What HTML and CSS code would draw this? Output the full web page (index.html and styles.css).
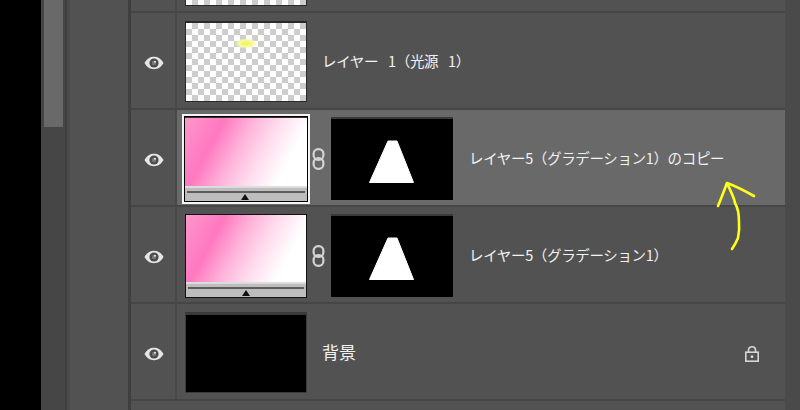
FILE: index.html
```html
<!DOCTYPE html>
<html lang="ja">
<head>
<meta charset="utf-8">
<title>レイヤー</title>
<link rel="stylesheet" href="styles.css">
</head>
<body>
<svg width="0" height="0" class="defs">
  <symbol id="eye" viewBox="0 0 20 14">
    <path d="M0.5 7C3 2.6 6.2 0.8 10 0.8S17 2.6 19.5 7C17 11.4 13.8 13.2 10 13.2S3 11.4 0.5 7Z" fill="#e6e6e6"/>
    <circle cx="10" cy="7" r="4.6" fill="#4c4c4c"/>
    <circle cx="10" cy="7" r="2.2" fill="#e2e2e2" opacity=".3"/>
    <circle cx="11" cy="5.8" r="1" fill="#e6e6e6"/>
  </symbol>
  <symbol id="link" viewBox="0 0 13 22">
    <g fill="none" stroke="#d4d4d4" stroke-width="2.2">
      <rect x="1.6" y="1.2" width="9.8" height="10.6" rx="4.6"/>
      <rect x="1.6" y="10.2" width="9.8" height="10.6" rx="4.6"/>
    </g>
  </symbol>
  <symbol id="mask" viewBox="0 0 122 81">
    <rect width="122" height="81" fill="#000"/>
    <path d="M57 22H66L82.5 63.5H38.5Z" fill="#fff" stroke="#fff" stroke-linejoin="round"/>
  </symbol>
</svg>
<div class="app">
  <div class="void"></div>
  <div class="scroll"><div class="scroll-thumb"></div></div>
  <div class="side"></div>
  <div class="layers">
    <div class="row row-top">
      <div class="eye-cell"></div>
      <div class="thumb-wrap"><div class="thumb thumb-check thumb-cut"></div></div>
    </div>
    <div class="row">
      <div class="eye-cell"><svg class="eye"><use href="#eye"/></svg></div>
      <div class="thumb-wrap"><div class="thumb thumb-check"><span class="glow"></span></div></div>
      <div class="name name-short">レイヤー 1（光源 1）</div>
    </div>
    <div class="row row-selected">
      <div class="eye-cell"><svg class="eye"><use href="#eye"/></svg></div>
      <div class="thumb-wrap">
        <div class="thumb-frame">
          <div class="thumb thumb-grad"><div class="bar"><span class="tick"></span></div></div>
        </div>
      </div>
      <svg class="link"><use href="#link"/></svg>
      <svg class="mask"><use href="#mask"/></svg>
      <div class="name">レイヤー5（グラデーション1）のコピー</div>
    </div>
    <div class="row">
      <div class="eye-cell"><svg class="eye"><use href="#eye"/></svg></div>
      <div class="thumb-wrap">
        <div class="thumb thumb-grad thumb-plain"><div class="bar"><span class="tick"></span></div></div>
      </div>
      <svg class="link"><use href="#link"/></svg>
      <svg class="mask"><use href="#mask"/></svg>
      <div class="name">レイヤー5（グラデーション1）</div>
    </div>
    <div class="row">
      <div class="eye-cell"><svg class="eye"><use href="#eye"/></svg></div>
      <div class="thumb-wrap"><div class="thumb thumb-black"></div></div>
      <div class="name name-short name-bg">背景</div>
      <svg class="lock" viewBox="0 0 16 18">
        <path d="M4.5 8V5.2C4.5 3 6 1.8 8 1.8S11.5 3 11.5 5.2V8" fill="none" stroke="#d6d6d6" stroke-width="1.6"/>
        <rect x="1.8" y="7.2" width="12.4" height="9" fill="none" stroke="#d6d6d6" stroke-width="1.6"/>
        <rect x="6.8" y="10.5" width="2.4" height="2.4" fill="#e0e0e0"/>
      </svg>
    </div>
    <div class="row row-end"></div>
  </div>
  <div class="edge"></div>
</div>
<svg class="arrow" viewBox="0 0 800 410">
  <path d="M718 206C721 199 724 191 727 183C730 190 734 197 735 203C738 208 739 214 739 222C739.500 228 739 233 738 238C736 243 734 246 732 249M727 183C736 186 745 191 754 196" fill="none" stroke="#ffff1a" stroke-width="2.6" stroke-linecap="round" stroke-linejoin="round"/>
</svg>
</body>
</html>
```
FILE: styles.css
```css
* { box-sizing: border-box; }
html, body { margin: 0; height: 100%; overflow: hidden; background: #000; }
body { position: relative; font-family: "Noto Sans CJK JP", "Noto Sans", sans-serif; }
.defs { position: absolute; }

.app { display: flex; width: 800px; height: 410px; background: #4b4b4b; }
.void { width: 41px; background: #000; }
.scroll { width: 26px; padding: 0 3px; background: #464646; border-right: 2px solid #3f3f3f; }
.scroll-thumb { width: 19px; height: 127px; background: #696969; }
.side { width: 62px; background: #525252; border-left: 1px solid #4b4b4b; border-right: 3px solid #3f3f3f; margin-left: 2px; }
.layers { display: flex; flex-direction: column; width: 654px; background: #525252; }
.edge { flex: 1; background: #4a4a4a; }

.row { display: flex; align-items: center; height: 97px; flex: none; padding-top: 2px; border-bottom: 2px solid #464646; background: #525252; }
.row-top { height: 13px; padding-top: 0; align-items: flex-end; overflow: hidden; }
.row-end { height: 11px; padding-top: 0; border-bottom: 0; }
.row-selected { background: #696969; }

.eye-cell { align-self: stretch; display: flex; align-items: center; justify-content: center; width: 46px; flex: none; margin-top: -2px; background: #525252; border-right: 2px solid #484848; }
.row-top .eye-cell, .row-end .eye-cell { margin-top: 0; }
.eye { width: 20px; height: 14px; margin: 5px 0 0 1px; }

.thumb-wrap { display: flex; align-items: center; justify-content: center; width: 128px; margin-left: 5px; flex: none; }
.thumb { width: 122px; height: 81px; flex: none; border: 1px solid #2a2a2a; border-top-width: 2px; }
.thumb-check {
  position: relative;
  background: #fff conic-gradient(#cdcdcd 25%, #fff 0 50%, #cdcdcd 0 75%, #fff 0) 0 0 / 12px 12px;
}
.thumb-cut { height: 6px; margin-bottom: 5px; border-top: 0; }
.row-top .thumb-wrap { align-self: flex-end; }
.glow { position: absolute; left: 48px; top: 15px; width: 24px; height: 11px; border-radius: 50%; background: radial-gradient(closest-side, #f2f65a 20%, #f8f8a8 60%, transparent); }
.thumb-black { background: #000; border: 1px solid #3a3a3a; border-top: 3px solid #3a3a3a; }

.thumb-frame { padding: 1px; background: #000; border: 2px solid #f4f4f4; display: flex; }
.thumb-grad {
  position: relative;
  border: 0;
  border-top: 1px solid #333;
  background: linear-gradient(118deg, #ff96cc 0%, #ff78c0 24%, #ffb4da 42%, #ffdcee 58%, #fff 76%);
  display: flex;
  flex-direction: column;
  justify-content: flex-end;
  height: 84px;
}
.thumb-plain { border: 1px solid #111; }
.bar { position: relative; height: 15px; background: #bdbdbd; border-top: 2px solid #dcdcdc; }
.bar::before { content: ""; position: absolute; left: 2px; right: 2px; top: 3px; height: 2px; background: #5c5c5c; }
.tick { position: absolute; left: 56px; bottom: 1px; border: 4px solid transparent; border-top: 0; border-bottom: 6px solid #111; }

.link { width: 13px; height: 22px; margin: 1px 0 0 2px; flex: none; }
.mask { width: 122px; height: 83px; margin-left: 6px; flex: none; border-top: 2px solid #3a3a3a; }
.name { margin-left: 16px; color: #f2f2f2; font-size: 14.5px; line-height: 20px; white-space: nowrap; letter-spacing: -0.35px; margin-top: -1px; }
.name-short { margin-left: 12px; word-spacing: 7px; }
.name-bg { font-size: 17px; letter-spacing: 0; }
.lock { width: 16px; height: 18px; margin: 2px 25px 0 auto; }

.arrow { position: absolute; left: 0; top: 0; width: 800px; height: 410px; pointer-events: none; }
```
